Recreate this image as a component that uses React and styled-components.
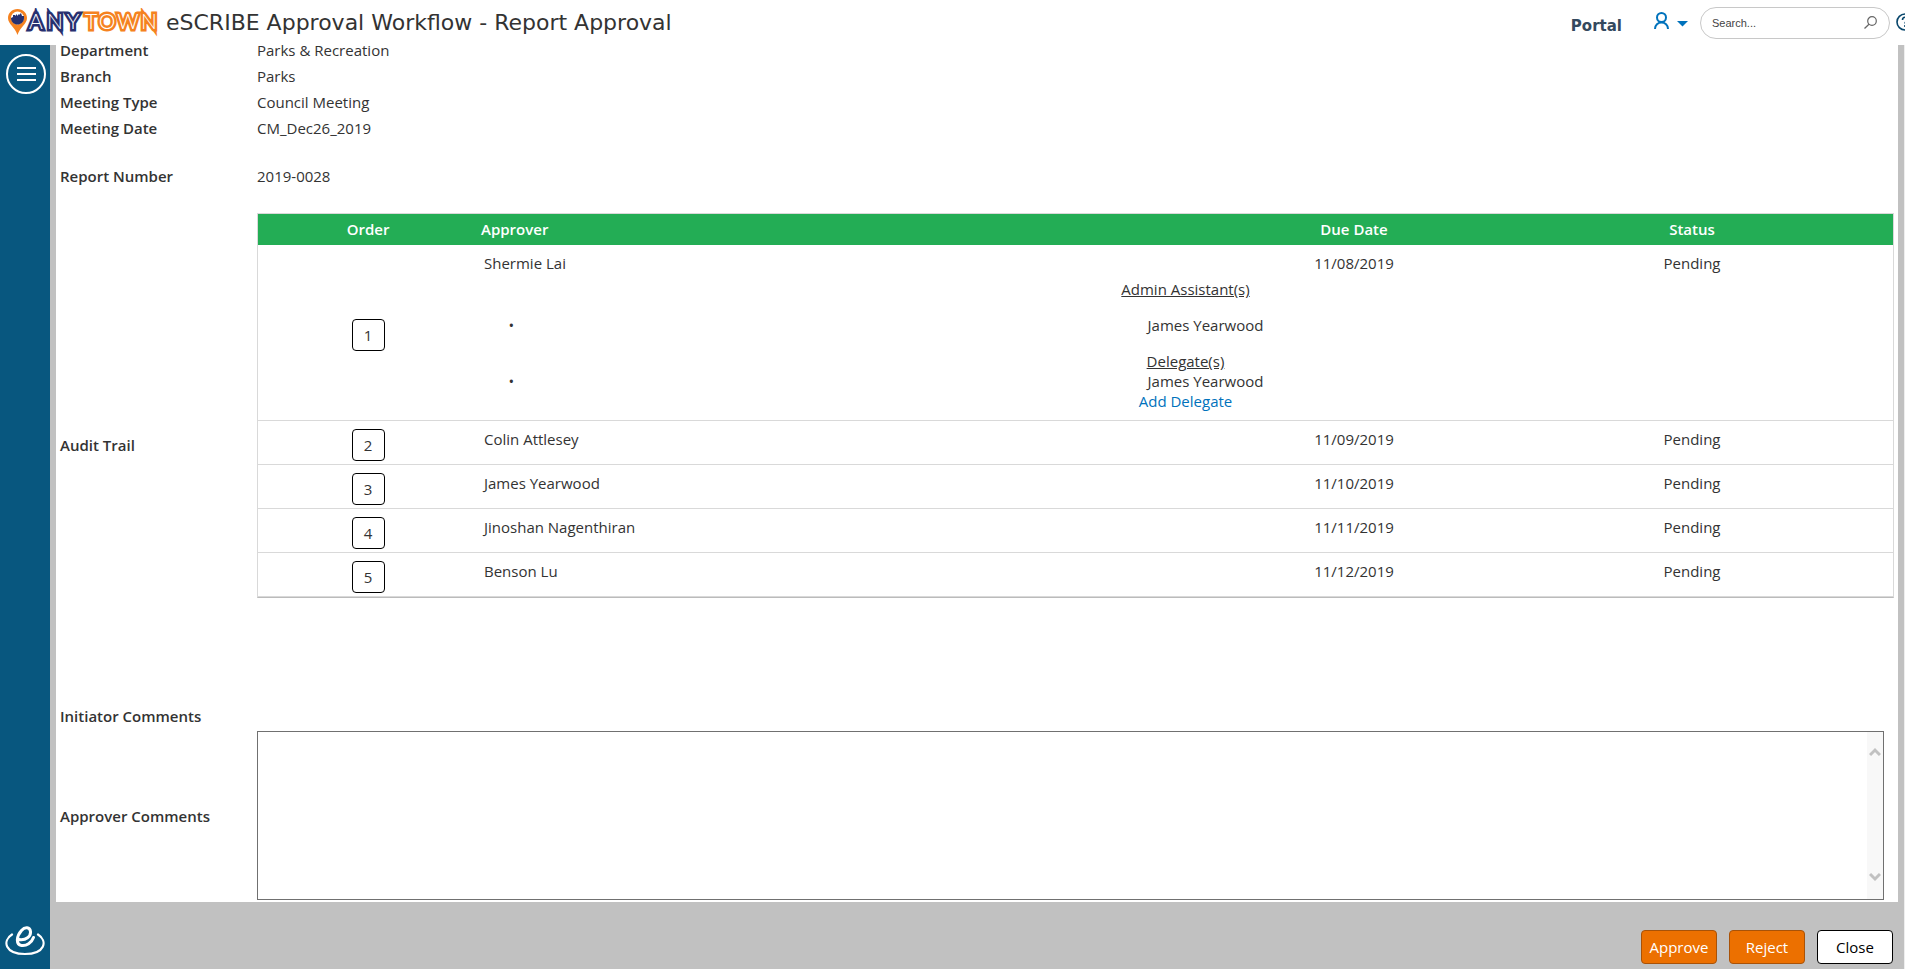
import { useCallback, useState } from "react";
import styled, { createGlobalStyle } from "styled-components";


const GlobalStyle = createGlobalStyle`
*{
box-sizing:border-box;
}

body{
margin:0;
background:#c1c1c1;
color:#333;
font-family:"Open Sans", sans-serif;
font-size:15px;
line-height:20px;
}
`

const Page = styled.div`
display:flex;
flex-direction:column;
min-height:100vh;
`

const Header = styled.header`
display:flex;
align-items:center;
height:45px;
padding:0 0 0 8px;
overflow:hidden;
background:#fff;
position:relative;
z-index:1;
`

const Logo = styled.svg`
flex:none;
width:150px;
height:30px;
margin-right:8px;
`

const Title = styled.h1`
margin:0;
font-family:"DejaVu Sans", sans-serif;
font-size:22px;
font-weight:400;
`

const Nav = styled.nav`
display:flex;
align-items:center;
height:36px;
margin:0 -9px 8px auto;
`

const PortalLink = styled.a`
margin:14px 32px 0 0;
color:#34495e;
font-family:"DejaVu Sans", sans-serif;
font-size:15px;
font-weight:700;
text-decoration:none;
`

const UserButton = styled.button`
display:flex;
align-items:center;
gap:8px;
margin:4px 12px 0 0;
padding:0;
border:none;
background:none;
cursor:pointer;
`

const SearchBox = styled.form`
display:flex;
align-items:center;
width:190px;
height:32px;
margin:8px 6px 0 0;
padding:0 12px 0 11px;
border:1px solid #c8c8c8;
border-radius:16px;
`

const SearchInput = styled.input`
flex:1;
min-width:0;
padding:0;
border:none;
outline:none;
background:none;
font-family:"Liberation Sans", sans-serif;
font-size:11px;

&::placeholder{
    color:#444;
}
`

const IconButton = styled.button`
display:flex;
flex:none;
padding:0;
border:none;
background:none;
cursor:pointer;
`

const HelpButton = styled(IconButton)`
margin-top:6px;
`

const Body = styled.div`
display:flex;
flex:1;
`

const Sidebar = styled.aside`
display:flex;
flex:none;
flex-direction:column;
align-items:center;
justify-content:space-between;
width:50px;
padding:9px 0 13px;
background:#08577f;
`

const MenuButton = styled.button`
display:flex;
flex-direction:column;
align-items:center;
justify-content:center;
gap:4px;
width:40px;
height:40px;
margin-left:2px;
padding:0;
border:2px solid #fff;
border-radius:50%;
background:none;
cursor:pointer;
`

const MenuBar = styled.span`
width:19px;
height:2px;
background:#fff;
`

const Main = styled.main`
flex:1;
min-width:0;
padding:0 6px;
border-right:1px solid #eee;
`

const Panel = styled.section`
margin-top:-8px;
padding:0 4px 2px;
background:#fff;
`

const Field = styled.div`
display:grid;
grid-template-columns:197px 1fr;
align-items:center;
min-height:${props => props.$tall ? '30px' : '26px'};
margin-top:${props => props.$spaced ? '22px' : '0'};
`

const Label = styled.label`
font-weight:600;
`

const TableWrap = styled.div`
padding:24px 0 103px;
`

const Table = styled.table`
width:100%;
table-layout:fixed;
border-collapse:separate;
border-spacing:0;
border:1px solid #d9d9d9;
border-bottom:1px solid #bbb;
`

const Th = styled.th`
width:${props => props.$width || 'auto'};
height:31px;
padding:0 3px 2px;
background:#23ad55;
color:#fff;
font-weight:600;
text-align:${props => props.$left ? 'left' : 'center'};
`

const Td = styled.td`
padding:8px 6px 0;
border-bottom:${props => props.$open ? 'none' : '1px solid #d9d9d9'};
text-align:${props => props.$left ? 'left' : 'center'};
vertical-align:top;
`

const OrderTd = styled(Td)`
padding:8px 0 3px;
vertical-align:middle;
`

const Badge = styled.span`
display:flex;
align-items:center;
justify-content:center;
width:33px;
height:32px;
margin:0 auto;
border:1px solid #000;
border-radius:4px;
`

const PeopleTd = styled(Td)`
padding:6px 0 9px;
`

const GroupTitle = styled.div`
text-decoration:underline;
`

const People = styled.ul`
margin:${props => props.$spaced ? '16px 0' : '0'};
padding-left:40px;
list-style-type:"• ";
`

const AddLink = styled.a`
display:block;
color:#0072bc;
text-decoration:none;
`

const CommentBox = styled.div`
display:flex;
height:169px;
margin-right:10px;
border:1px solid #707070;
`

const TextArea = styled.textarea`
flex:1;
padding:4px;
border:none;
outline:none;
resize:none;
overflow:hidden;
font:inherit;
color:inherit;
`

const Scroll = styled.div`
display:flex;
flex-direction:column;
align-items:center;
justify-content:space-between;
width:16px;
padding:15px 0 17px;
background:#f8f8f8;
`

const Actions = styled.div`
display:flex;
justify-content:flex-end;
gap:12px;
padding:28px 5px 5px 0;
`

const Button = styled.button`
width:76px;
height:34px;
padding:0;
border:1px solid ${props => props.$plain ? '#000' : '#a85208'};
border-radius:4px;
background:${props => props.$plain ? '#fff' : '#ec7000'};
color:${props => props.$plain ? '#000' : '#fff'};
font:inherit;
cursor:pointer;
`

const details = [
    { label: 'Department', value: 'Parks & Recreation' },
    { label: 'Branch', value: 'Parks' },
    { label: 'Meeting Type', value: 'Council Meeting' },
    { label: 'Meeting Date', value: 'CM_Dec26_2019' },
    { label: 'Report Number', value: '2019-0028', spaced: true },
]

const approvers = [
    { name: 'Shermie Lai', date: '11/08/2019', status: 'Pending', assistants: ['James Yearwood'], delegates: ['James Yearwood'] },
    { name: 'Colin Attlesey', date: '11/09/2019', status: 'Pending' },
    { name: 'James Yearwood', date: '11/10/2019', status: 'Pending' },
    { name: 'Jinoshan Nagenthiran', date: '11/11/2019', status: 'Pending' },
    { name: 'Benson Lu', date: '11/12/2019', status: 'Pending' },
]


// wide coloured stroke with a thin white line in the middle of each letter
const AnytownLogo = () => (
    <Logo viewBox="0 0 150 30" role="img" aria-label="Anytown">
        <path d="M9.500 1C4 1 0 5 0 10c0 6 7 9 9.500 17C12 19 19 16 19 10c0-5-4-9-9.500-9z" fill="#f58220" />
        <circle cx="9.500" cy="10" r="6.500" fill="#fff" />
        <path d="M3 10l2-1V7h2v1l2-2v2l2-2v1l2-2 1 3h2v2c0 4-3 6.500-6.500 6.500S3 14 3 10z" fill="#27306f" />
        <g fontFamily="Lato, sans-serif" fontSize="21" fontWeight="300" textAnchor="middle" fill="#fff" strokeWidth="5" paintOrder="stroke">
            <text x="28 47 65" y="21" stroke="#27306f">ANY</text>
            <text x="83 99 120 141" y="21" stroke="#f58220">TOWN</text>
        </g>
    </Logo>
)

const UserIcon = () => (
    <svg width="15" height="18" viewBox="0 0 15 18" fill="none" stroke="#0072bc" strokeWidth="2">
        <circle cx="7.500" cy="5.500" r="4.500" />
        <path d="M1 17c0-4 3-6.500 6.500-6.500S14 13 14 17" />
    </svg>
)

const CaretIcon = () => (
    <svg width="11" height="12" viewBox="0 0 11 12">
        <path d="M0 6h11L5.500 11.500z" fill="#0072bc" />
    </svg>
)

const SearchIcon = () => (
    <svg width="13" height="13" viewBox="0 0 13 13" fill="none" stroke="#666" strokeWidth="1.200">
        <circle cx="8" cy="5" r="4.300" />
        <path d="M5 8.200L.5 12.500" />
    </svg>
)

const HelpIcon = () => (
    <svg width="18" height="18" viewBox="0 0 18 18" fill="none" stroke="#08466b" strokeWidth="1.600">
        <circle cx="9" cy="9" r="8" />
        <path d="M6.500 7c0-3.500 5-3.500 5-.5 0 2-2.500 2-2.500 4M9 12v2" />
    </svg>
)

const Chevron = ({ d }) => (
    <svg width="12" height="10" viewBox="0 0 12 10" fill="none" stroke="#c1c1c1" strokeWidth="3">
        <path d={d} />
    </svg>
)

const ScribeIcon = () => (
    <svg width="40" height="30" viewBox="0 0 40 30" fill="none" stroke="#fff" strokeLinecap="round">
        <path d="M7 8.500C-3 15 0 28 20 28s23-13 13-19.500" strokeWidth="2.200" />
        <path d="M14 13.500c7 1 12-3 11.500-8C25 1 20 .5 16.500 4.500c-5 5.500-6 14 0 15 5 .7 10-2.500 12-8" strokeWidth="3" />
    </svg>
)

const ApproverRows = ({ order, person }) => {
    const { name, date, status, assistants, delegates } = person;

    return (
        <>
            <tr>
                <OrderTd rowSpan={assistants ? 2 : 1}><Badge>{order}</Badge></OrderTd>
                <Td $left $open={assistants}>{name}</Td>
                <Td $open={assistants}>{date}</Td>
                <Td $open={assistants}>{status}</Td>
            </tr>
            {assistants && (
                <tr>
                    <PeopleTd colSpan={3}>
                        <GroupTitle>Admin Assistant(s)</GroupTitle>
                        <People $spaced>
                            {assistants.map(item => <li key={item}>{item}</li>)}
                        </People>
                        <GroupTitle>Delegate(s)</GroupTitle>
                        <People>
                            {delegates.map(item => <li key={item}>{item}</li>)}
                        </People>
                        <AddLink href="#delegate">Add Delegate</AddLink>
                    </PeopleTd>
                </tr>
            )}
        </>
    )
}

const App = () => {
    const [comment, setComment] = useState('');

    const onChange = useCallback(e => {
        setComment(e.target.value)
    }, []);

    return (
        <Page>
            <GlobalStyle />
            <Header>
                <AnytownLogo />
                <Title>eSCRIBE Approval Workflow - Report Approval</Title>
                <Nav>
                    <PortalLink href="#portal">Portal</PortalLink>
                    <UserButton aria-label="Account"><UserIcon /><CaretIcon /></UserButton>
                    <SearchBox>
                        <SearchInput type="text" name="search" aria-label="Search" placeholder="Search..." />
                        <IconButton type="button" aria-label="Run search"><SearchIcon /></IconButton>
                    </SearchBox>
                    <HelpButton aria-label="Help"><HelpIcon /></HelpButton>
                </Nav>
            </Header>
            <Body>
                <Sidebar>
                    <MenuButton aria-label="Menu"><MenuBar /><MenuBar /><MenuBar /></MenuButton>
                    <ScribeIcon />
                </Sidebar>
                <Main>
                    <Panel>
                        {details.map(item => (
                            <Field key={item.label} $spaced={item.spaced}>
                                <Label as="span">{item.label}</Label>
                                <span>{item.value}</span>
                            </Field>
                        ))}
                        <Field>
                            <Label as="span">Audit Trail</Label>
                            <TableWrap>
                                <Table>
                                    <thead>
                                        <tr>
                                            <Th $width="220px">Order</Th>
                                            <Th $left>Approver</Th>
                                            <Th $width="274px">Due Date</Th>
                                            <Th $width="402px">Status</Th>
                                        </tr>
                                    </thead>
                                    <tbody>
                                        {approvers.map((person, i) => (
                                            <ApproverRows key={person.name} order={i + 1} person={person} />
                                        ))}
                                    </tbody>
                                </Table>
                            </TableWrap>
                        </Field>
                        <Field $tall>
                            <Label as="span">Initiator Comments</Label>
                        </Field>
                        <Field>
                            <Label htmlFor="comment">Approver Comments</Label>
                            <CommentBox>
                                <TextArea id="comment" value={comment} onChange={onChange} />
                                <Scroll>
                                    <Chevron d="M1 8l5-5 5 5" />
                                    <Chevron d="M1 2l5 5 5-5" />
                                </Scroll>
                            </CommentBox>
                        </Field>
                    </Panel>
                    <Actions>
                        <Button>Approve</Button>
                        <Button>Reject</Button>
                        <Button $plain>Close</Button>
                    </Actions>
                </Main>
            </Body>
        </Page>
    )
}

export default App
